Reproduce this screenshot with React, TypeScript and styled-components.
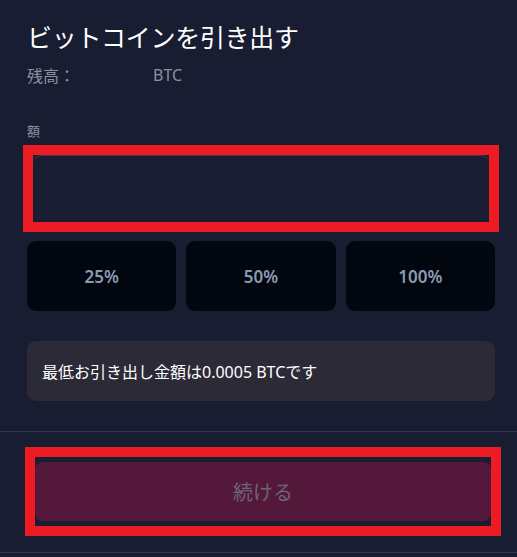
import React from "react";
import styled, { createGlobalStyle } from "styled-components";

const Global = createGlobalStyle`
  html, body { margin: 0; padding: 0; background: #191d32; }
  body { font-family: "Noto Sans", "Noto Sans CJK JP", sans-serif; }
  * { box-sizing: border-box; }
`;

const Page = styled.div`
  width: 517px;
  height: 557px;
  background: #191d32;
  display: flex;
  flex-direction: column;
  overflow: hidden;
`;

const Body = styled.div`
  padding: 21px 22px 0 27px;
  display: flex;
  flex-direction: column;
`;

const Title = styled.h1`
  margin: 0;
  font-family: "Noto Sans CJK JP", sans-serif;
  font-size: 25px;
  line-height: 30px;
  font-weight: 400;
  color: #ffffff;
  letter-spacing: -0.3px;
`;

const BalanceRow = styled.div`
  margin-top: 12px;
  display: flex;
  align-items: center;
  font-size: 16px;
  line-height: 24px;
  color: #8a92a4;
`;

const BalanceLabel = styled.span`
  width: 126px;
  font-family: "Noto Sans CJK JP", sans-serif;
`;

const Unit = styled.span`
  font-family: "Noto Sans", sans-serif;
  font-size: 16px;
`;

const FieldLabel = styled.label`
  margin-top: 36px;
  font-family: "Noto Sans CJK JP", sans-serif;
  font-size: 13px;
  line-height: 16px;
  color: #8a92a4;
`;

const Highlight = styled.div`
  margin: 6px -4px 0 -4px;
  border: 10px solid #ed1c24;
  height: 87px;
  display: flex;
`;

const AmountInput = styled.input`
  flex: 1;
  min-width: 0;
  background: #1a1e33;
  border: none;
  border-top: 1px solid #3a3e55;
  border-radius: 8px;
  outline: none;
  color: #fff;
  font-size: 16px;
  padding: 0 14px;
`;

const Presets = styled.div`
  margin-top: 9px;
  display: grid;
  grid-template-columns: repeat(3, 1fr);
  gap: 10px;
`;

const PresetButton = styled.button`
  height: 70px;
  border: none;
  border-radius: 9px;
  background: #02060f;
  color: #8a9bb0;
  font-family: "Noto Sans", sans-serif;
  font-size: 17px;
  font-weight: 600;
  cursor: pointer;
`;

const Notice = styled.div`
  margin-top: 30px;
  height: 60px;
  border-radius: 9px;
  background: #2b2a36;
  display: flex;
  align-items: center;
  padding: 0 15px;
  color: #ffffff;
  font-family: "Noto Sans", "Noto Sans CJK JP", sans-serif;
  font-size: 16px;
`;

const Divider = styled.hr`
  margin: 30px 0 0 0;
  border: none;
  height: 1px;
  background: #34374b;
  width: 100%;
`;

const Footer = styled.div`
  padding: 15px 16px 0 25px;
`;

const FooterHighlight = styled.div`
  border: 10px solid #ed1c24;
  height: 89px;
  padding: 5px 0;
  display: flex;
`;

const ContinueButton = styled.button`
  flex: 1;
  border: none;
  border-radius: 8px;
  background: #54193a;
  color: #6b6477;
  font-family: "Noto Sans CJK JP", sans-serif;
  font-size: 20px;
  cursor: not-allowed;
`;

const BottomDivider = styled.hr`
  margin: 16px 0 0 0;
  border: none;
  height: 1px;
  background: #34374b;
  width: 100%;
`;

export default function App() {
  return (
    <Page>
      <Global />
      <Body>
        <Title>ビットコインを引き出す</Title>
        <BalanceRow>
          <BalanceLabel>残高：</BalanceLabel>
          <Unit>BTC</Unit>
        </BalanceRow>
        <FieldLabel>額</FieldLabel>
        <Highlight>
          <AmountInput type="text" />
        </Highlight>
        <Presets>
          <PresetButton>25%</PresetButton>
          <PresetButton>50%</PresetButton>
          <PresetButton>100%</PresetButton>
        </Presets>
        <Notice>最低お引き出し金額は0.0005 BTCです</Notice>
      </Body>
      <Divider />
      <Footer>
        <FooterHighlight>
          <ContinueButton disabled>続ける</ContinueButton>
        </FooterHighlight>
      </Footer>
      <BottomDivider />
    </Page>
  );
}
